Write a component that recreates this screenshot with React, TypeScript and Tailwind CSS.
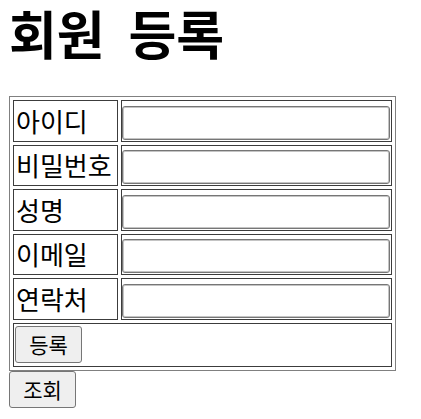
import React from 'react';

const fields = ['아이디', '비밀번호', '성명', '이메일', '연락처'];

const font = { fontFamily: '"Noto Sans CJK KR", "Noto Sans", sans-serif' };

export default function App() {
  return (
    <div className="bg-white text-black px-[9px]" style={font}>
      {/* 제목 */}
      <h1 className="text-[52px] leading-[66px] font-bold mb-[30px] [word-spacing:12px]">회원 등록</h1>

      {/* 등록 폼 */}
      <table className="border border-[#808080] border-separate border-spacing-[3px]">
        <tbody>
          {fields.map((label) => (
            <tr key={label}>
              <td className="w-[105px] h-[41.5px] border border-[#3c3c3c] px-[2px] py-0 align-middle text-[26px] leading-[30px] whitespace-nowrap">
                {label}
              </td>
              <td className="w-[271px] h-[41.5px] border border-[#3c3c3c] p-0 pb-[1px] align-bottom">
                <input
                  type="text"
                  className="block w-[268px] h-[34px] bg-white border border-[#767676] rounded-[3px] shadow-[inset_0_0_0_1px_#c4c4c4] outline-none"
                />
              </td>
            </tr>
          ))}
          <tr>
            <td colSpan={2} className="h-[44px] border border-[#3c3c3c] pl-[1px] pt-[2px] pb-[2px] align-top">
              <button className="w-[67px] h-[37px] bg-[#efefef] border border-[#767676] rounded-[3px] text-[21px] leading-none">
                등록
              </button>
            </td>
          </tr>
        </tbody>
      </table>

      <button className="block w-[67px] h-[37px] bg-[#efefef] border border-[#767676] rounded-[3px] text-[21px] leading-none">
        조회
      </button>
    </div>
  );
}
